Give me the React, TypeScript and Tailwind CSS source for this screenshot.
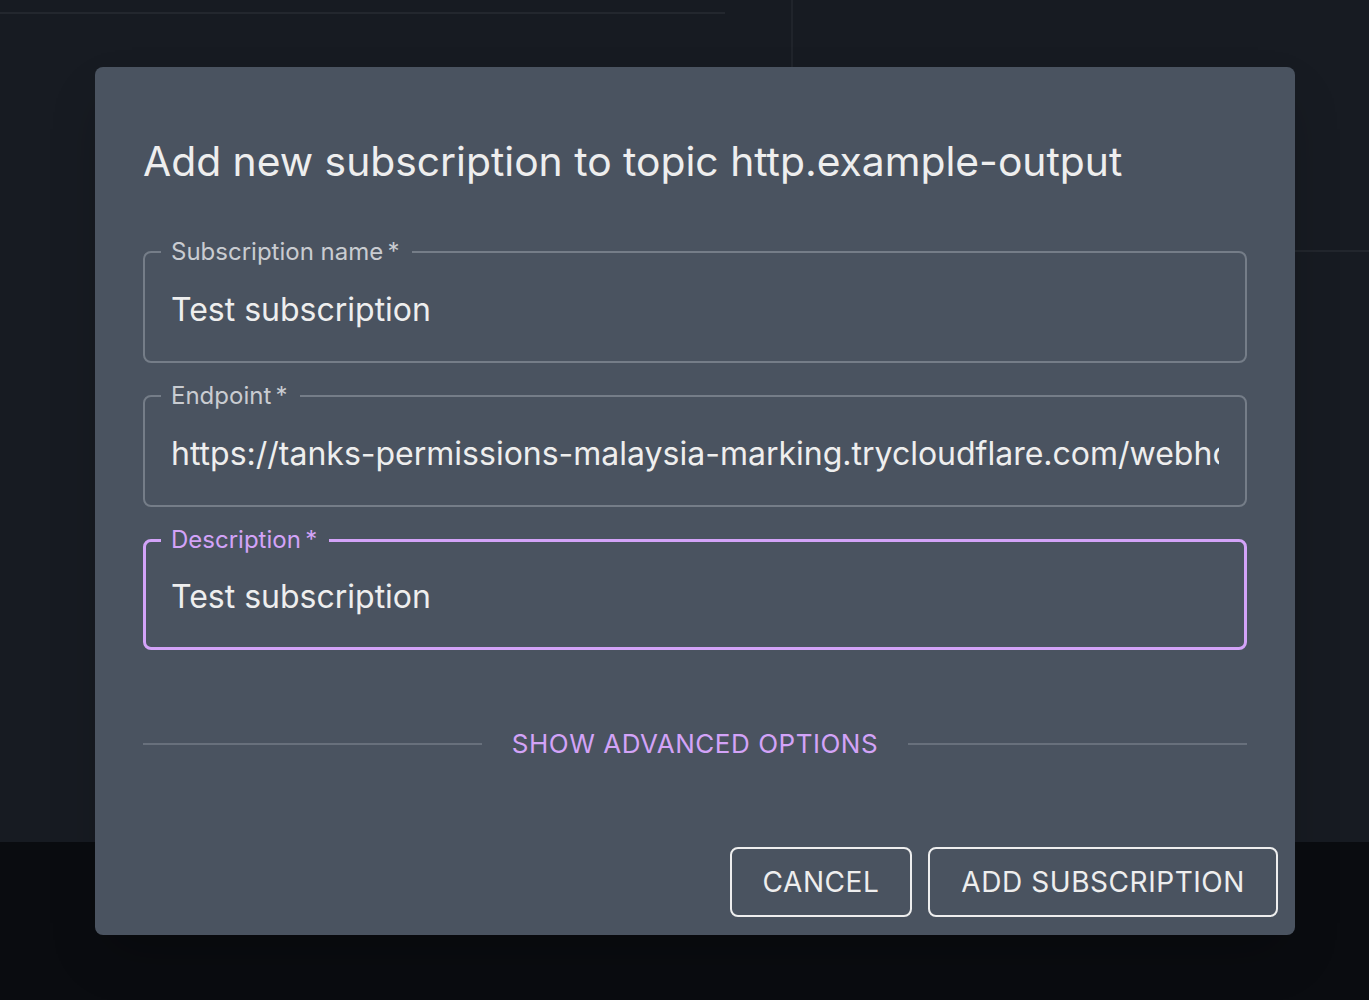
import React, { useState } from 'react';

const font = { fontFamily: 'Inter, "Noto Sans", sans-serif' };

interface FieldProps {
  label: string;
  value: string;
  focused?: boolean;
}

const OutlinedField: React.FC<FieldProps> = ({ label, value, focused }) => {
  const [text, setText] = useState(value);
  return (
    <fieldset
      className={`rounded-[8px] pb-[8px] ${
        focused
          ? 'border-[3px] border-[#d3a3f8] px-[15px]'
          : 'border-2 border-[#757d88] px-4'
      }`}
    >
      <legend
        className={`pl-[10px] pr-[12px] text-[24px] leading-[28px] ${
          focused ? 'text-[#d3a3f8]' : 'text-[#c9ccd1]'
        }`}
      >
        {label}
        {'\u2009*'}
      </legend>
      <input
        value={text}
        onChange={(e) => setText(e.target.value)}
        className={`w-full bg-transparent pl-[10px] pr-[10px] text-[32px] text-[#eeeeee] outline-none ${
          focused ? 'h-[85px]' : 'h-[87px]'
        }`}
      />
    </fieldset>
  );
};

const App: React.FC = () => {
  return (
    <div className="relative w-[1369px] h-[1000px] overflow-hidden" style={font}>
      {/* dimmed page behind the dialog */}
      <div className="flex flex-col h-full">
        <div className="flex h-[842px] bg-[#171b22]">
          <div className="w-[791px] pt-[12px]">
            <div className="w-[725px] h-[2px] bg-[#23272e]" />
          </div>
          <div className="flex-1 border-l-2 border-[#20242b]">
            <div className="h-[252px] border-b-2 border-[#22262d]" />
          </div>
        </div>
        <div className="flex-1 bg-[#0a0c10]" />
      </div>

      {/* dialog */}
      <div className="absolute left-[95px] top-[67px] w-[1200px] h-[868px] rounded-[8px] bg-[#4a5360] shadow-2xl flex flex-col">
        <h2 className="px-[48px] pt-[70px] text-[40.8px] leading-[48px] text-[#eeeeee] font-normal">
          Add new subscription to topic http.example-output
        </h2>

        <div className="flex flex-col gap-[19px] px-[48px] mt-[53px]">
          <OutlinedField label="Subscription name" value="Test subscription" />
          <OutlinedField
            label="Endpoint"
            value="https://tanks-permissions-malaysia-marking.trycloudflare.com/webhook"
          />
          <OutlinedField label="Description" value="Test subscription" focused />
        </div>

        <div className="flex items-center gap-[30px] px-[48px] mt-[74px]">
          <div className="flex-1 h-[2px] bg-[#68707c]" />
          <button className="text-[26px] tracking-[0.02em] text-[#d3a3f8]">
            SHOW ADVANCED OPTIONS
          </button>
          <div className="flex-1 h-[2px] bg-[#68707c]" />
        </div>

        <div className="flex justify-end gap-[16px] px-[17px] mt-auto mb-[18px]">
          <button className="h-[70px] px-[31px] rounded-[8px] border-2 border-[#eeeeee] text-[28px] tracking-[0.02em] text-[#eeeeee]">
            CANCEL
          </button>
          <button className="h-[70px] px-[31px] rounded-[8px] border-2 border-[#eeeeee] text-[28px] tracking-[0.02em] text-[#eeeeee]">
            ADD SUBSCRIPTION
          </button>
        </div>
      </div>
    </div>
  );
};

export default App;
